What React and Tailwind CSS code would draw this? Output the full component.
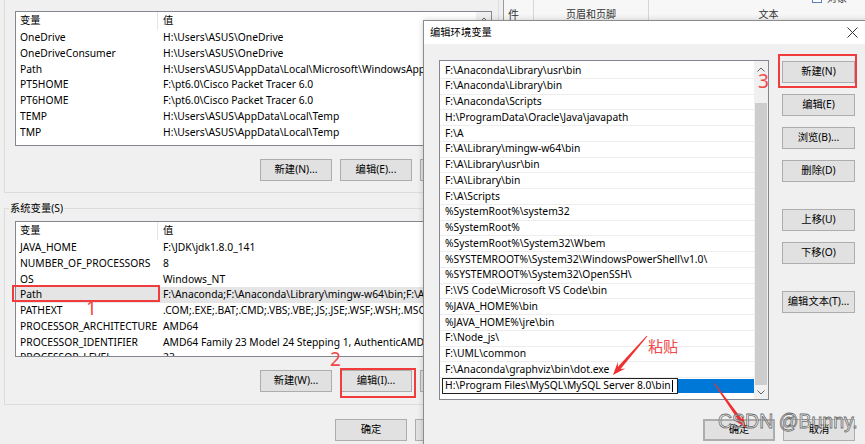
import React from "react";

const FONT = "font-['Noto_Sans','Noto_Sans_CJK_SC',sans-serif]";

const userRows = [
  ["OneDrive", String.raw`H:\Users\ASUS\OneDrive`],
  ["OneDriveConsumer", String.raw`H:\Users\ASUS\OneDrive`],
  ["Path", String.raw`H:\Users\ASUS\AppData\Local\Microsoft\WindowsApps;`],
  ["PT5HOME", String.raw`F:\pt6.0\Cisco Packet Tracer 6.0`],
  ["PT6HOME", String.raw`F:\pt6.0\Cisco Packet Tracer 6.0`],
  ["TEMP", String.raw`H:\Users\ASUS\AppData\Local\Temp`],
  ["TMP", String.raw`H:\Users\ASUS\AppData\Local\Temp`],
];

const sysRows = [
  ["JAVA_HOME", String.raw`F:\JDK\jdk1.8.0_141`],
  ["NUMBER_OF_PROCESSORS", "8"],
  ["OS", "Windows_NT"],
  ["Path", String.raw`F:\Anaconda;F:\Anaconda\Library\mingw-w64\bin;F:\Anaconda\Library\usr\bin;`],
  ["PATHEXT", ".COM;.EXE;.BAT;.CMD;.VBS;.VBE;.JS;.JSE;.WSF;.WSH;.MSC"],
  ["PROCESSOR_ARCHITECTURE", "AMD64"],
  ["PROCESSOR_IDENTIFIER", "AMD64 Family 23 Model 24 Stepping 1, AuthenticAMD"],
  ["PROCESSOR_LEVEL", "23"],
];

const pathRows = [
  String.raw`F:\Anaconda\Library\usr\bin`,
  String.raw`F:\Anaconda\Library\bin`,
  String.raw`F:\Anaconda\Scripts`,
  String.raw`H:\ProgramData\Oracle\Java\javapath`,
  String.raw`F:\A`,
  String.raw`F:\A\Library\mingw-w64\bin`,
  String.raw`F:\A\Library\usr\bin`,
  String.raw`F:\A\Library\bin`,
  String.raw`F:\A\Scripts`,
  String.raw`%SystemRoot%\system32`,
  String.raw`%SystemRoot%`,
  String.raw`%SystemRoot%\System32\Wbem`,
  String.raw`%SYSTEMROOT%\System32\WindowsPowerShell\v1.0\ `,
  String.raw`%SYSTEMROOT%\System32\OpenSSH\ `,
  String.raw`F:\VS Code\Microsoft VS Code\bin`,
  String.raw`%JAVA_HOME%\bin`,
  String.raw`%JAVA_HOME%\jre\bin`,
  String.raw`F:\Node_js\ `,
  String.raw`F:\UML\common`,
  String.raw`F:\Anaconda\graphviz\bin\dot.exe`,
];

const Up = () => (
  <svg width="8" height="5" viewBox="0 0 8 5">
    <path d="M0.5 4.5L4 1L7.5 4.5" fill="none" stroke="#606060" strokeWidth="1" />
  </svg>
);
const Down = () => (
  <svg width="8" height="5" viewBox="0 0 8 5">
    <path d="M0.5 0.5L4 4L7.5 0.5" fill="none" stroke="#606060" strokeWidth="1" />
  </svg>
);

function Btn({ children, className = "" }) {
  return (
    <div
      className={
        "flex h-[22px] w-[72px] shrink-0 items-center justify-center border border-[#adadad] bg-[#e1e1e1] text-black " +
        className
      }
    >
      {children}
    </div>
  );
}

function VarList({ rows, selected, heightClass }) {
  return (
    <div className={"flex border border-[#828790] bg-white " + heightClass}>
      <div className="flex min-w-0 flex-1 flex-col overflow-hidden">
        <div className="flex h-[18px] shrink-0 items-center">
          <div className="flex h-full w-[142px] shrink-0 items-center border-r border-[#e5e5e5] pl-[4px]">变量</div>
          <div className="pl-[5px]">值</div>
        </div>
        {rows.map(([k, v], i) => (
          <div
            key={i}
            className={
              "flex h-[15.75px] shrink-0 items-center whitespace-nowrap " +
              (i === selected ? "bg-[#e5e5e5]" : "")
            }
          >
            <div className="w-[142px] shrink-0 pl-[4px]">{k}</div>
            <div className="pl-[5px]">{v}</div>
          </div>
        ))}
      </div>
      <div className="flex w-[15px] shrink-0 flex-col items-center bg-[#f0f0f0] pt-[5px]">
        <Up />
      </div>
    </div>
  );
}

function arrowPts(tx, ty, px, py, hl, hw, w0, w1) {
  const dx = px - tx;
  const dy = py - ty;
  const L = Math.hypot(dx, dy);
  const ux = dx / L;
  const uy = dy / L;
  const nx = -uy;
  const ny = ux;
  const bx = px - ux * hl;
  const by = py - uy * hl;
  const ix = px - ux * (hl - 3.5);
  const iy = py - uy * (hl - 3.5);
  return [
    [tx + nx * w0, ty + ny * w0],
    [ix + nx * w1, iy + ny * w1],
    [bx + nx * hw, by + ny * hw],
    [px, py],
    [bx - nx * hw, by - ny * hw],
    [ix - nx * w1, iy - ny * w1],
    [tx - nx * w0, ty - ny * w0],
  ]
    .map((p) => p[0].toFixed(1) + "," + p[1].toFixed(1))
    .join(" ");
}

export default function App() {
  return (
    <div className={"relative h-[444px] w-[865px] overflow-hidden bg-[#f0f0f0] text-[10.3px] text-black " + FONT}>
      {/* Word ribbon behind */}
      <div className="absolute left-[504px] top-0 flex h-[20px] w-[361px] overflow-hidden bg-[#f7f7f7] text-[10px] text-[#333]">
        <div className="relative w-[29px] shrink-0">
          <span className="absolute left-[4px] top-[7px] text-[11px]">件</span>
        </div>
        <div className="flex w-[115px] shrink-0 items-end justify-center border-l border-[#d6d6d6]">
          <span className="leading-[12px]">页眉和页脚</span>
        </div>
        <div className="relative flex w-[240px] shrink-0 items-end justify-center border-l border-[#d6d6d6]">
          <span className="leading-[12px]">文本</span>
        </div>
        <div className="absolute left-[308px] top-[-2px] h-[5px] w-[10px] border border-[#5a7fb8] bg-white" />
        <span className="absolute left-[323px] top-[-8px] leading-[12px]">对象</span>
      </div>

      {/* Environment Variables window (behind) */}
      <div className="absolute left-0 top-[-24px] flex h-[480px] w-[504px] flex-col border-r border-[#9a9a9a] bg-[#f0f0f0] px-[4px] pt-[20px]">
        <div className="relative flex flex-col border border-[#dcdcdc] pb-[11px] pl-[10px] pr-[6px] pt-[14px]">
          <span className="absolute left-[4px] top-[-9px] bg-[#f0f0f0] px-[1px] leading-[12px]">ASUS 的用户变量(U)</span>
          <VarList rows={userRows} selected={-1} heightClass="h-[135px]" />
          <div className="mt-[13px] flex justify-end gap-2">
            <Btn>新建(N)...</Btn>
            <Btn>编辑(E)...</Btn>
            <Btn>删除(D)</Btn>
          </div>
        </div>

        <div className="relative mt-[15px] flex flex-col border border-[#dcdcdc] pb-[12px] pl-[10px] pr-[6px] pt-[12px]">
          <span className="absolute left-[4px] top-[-7px] bg-[#f0f0f0] px-[1px] leading-[12px]">系统变量(S)</span>
          <VarList rows={sysRows} selected={3} heightClass="h-[136px]" />
          <div className="mt-[13px] flex justify-end gap-2">
            <Btn>新建(W)...</Btn>
            <Btn>编辑(I)...</Btn>
            <Btn>删除(L)</Btn>
          </div>
        </div>

        <div className="mt-[14px] flex justify-end gap-2 pr-[12px]">
          <Btn>确定</Btn>
          <Btn>取消</Btn>
        </div>
      </div>

      {/* Edit environment variable dialog */}
      <div className="absolute left-[423px] top-[20px] flex h-[430px] w-[445px] flex-col border border-[#8c8c8c] bg-[#f0f0f0] shadow-[0_0_6px_rgba(0,0,0,0.18)]">
        <div className="flex h-[23px] shrink-0 items-center justify-between bg-white pl-[6px] pr-[9px]">
          <span>编辑环境变量</span>
          <svg width="11" height="11" viewBox="0 0 11 11">
            <path d="M0.5 0.5L10.5 10.5M10.5 0.5L0.5 10.5" stroke="#333" strokeWidth="1" />
          </svg>
        </div>
        <div className="flex pl-[15px] pt-[16px]">
          <div className="flex h-[340px] w-[330px] shrink-0 border border-[#828790] bg-white">
            <div className="flex min-w-0 flex-1 flex-col overflow-hidden pt-[2px]">
              {pathRows.map((t, i) => (
                <div
                  key={i}
                  className="flex h-[15.75px] shrink-0 items-center whitespace-nowrap border-b border-[#ededed] pl-[5px]"
                >
                  {t}
                </div>
              ))}
              <div className="flex h-[15.75px] shrink-0 items-center pl-[2px]">
                <div className="flex h-[16px] w-[236px] shrink-0 items-center whitespace-nowrap border border-[#222] bg-white pl-[2px]">
                  {String.raw`H:\Program Files\MySQL\MySQL Server 8.0\bin`}
                  <span className="ml-[1px] inline-block h-[12px] w-[1px] bg-black" />
                </div>
                <div className="h-[14px] flex-1 bg-[#0078d7]" />
              </div>
            </div>
            <div className="flex w-[14px] shrink-0 flex-col bg-[#f0f0f0]">
              <div className="flex h-[16px] shrink-0 items-center justify-center">
                <Up />
              </div>
              <div className="h-[26px] shrink-0" />
              <div className="mx-[1px] h-[282px] shrink-0 bg-[#cdcdcd]" />
              <div className="flex flex-1 items-center justify-center">
                <Down />
              </div>
            </div>
          </div>
          <div className="ml-[13px] flex flex-col pt-[1px]">
            <Btn className="w-[73px]">新建(N)</Btn>
            <Btn className="mt-[11px] w-[73px]">编辑(E)</Btn>
            <Btn className="mt-[11px] w-[73px]">浏览(B)...</Btn>
            <Btn className="mt-[11px] w-[73px]">删除(D)</Btn>
            <Btn className="mt-[27px] w-[73px]">上移(U)</Btn>
            <Btn className="mt-[11px] w-[73px]">下移(O)</Btn>
            <Btn className="mt-[27px] w-[73px]">编辑文本(T)...</Btn>
          </div>
        </div>
        <div className="mt-[19px] flex justify-end gap-2 pr-[12px]">
          <Btn className="border-2 border-[#0078d7]">确定</Btn>
          <Btn>取消</Btn>
        </div>
      </div>

      {/* Annotations */}
      <div className="absolute left-[12px] top-[285px] h-[17px] w-[148px] border-2 border-[#f03c3c]" />
      <div className="absolute left-[340px] top-[368px] h-[30px] w-[76px] border-2 border-[#f03c3c]" />
      <div className="absolute left-[778px] top-[54px] h-[34px] w-[79px] border-2 border-[#f03c3c]" />

      <span className="absolute left-[86px] top-[299px] text-[19px] leading-none text-[#f04848]">1</span>
      <span className="absolute left-[330px] top-[350px] text-[19px] leading-none text-[#f04848]">2</span>
      <span className="absolute left-[758px] top-[72px] text-[19px] leading-none text-[#f04848]">3</span>
      <span className="absolute left-[648px] top-[339px] text-[15px] leading-none text-[#f04848]">粘贴</span>

      <svg className="pointer-events-none absolute left-0 top-0" width="865" height="444">
        <polygon points={arrowPts(647, 336, 613, 375, 13, 5, 0.5, 1.8)} fill="#f03030" />
        <polygon points={arrowPts(714, 383, 746, 428, 13, 5, 0.5, 1.8)} fill="#f03030" />
      </svg>

      <span className="absolute left-[718px] top-[412px] whitespace-nowrap font-['Liberation_Sans',sans-serif] text-[19.5px] leading-none text-[rgba(255,255,255,0.6)] [-webkit-text-stroke:0.8px_rgba(95,95,95,0.9)]">
        CSDN @Bunny.
      </span>
    </div>
  );
}
